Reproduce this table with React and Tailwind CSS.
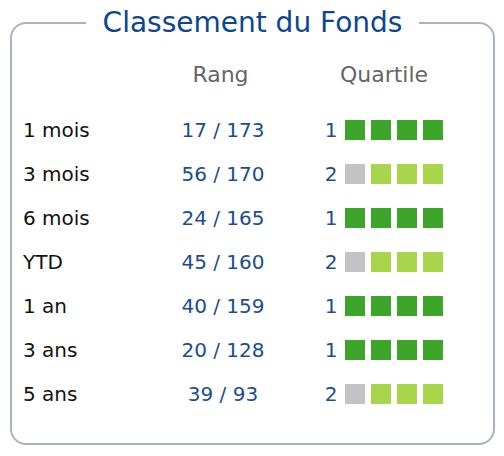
import React from "react";

const rows = [
  { label: "1 mois", rang: "17 / 173", q: 1 },
  { label: "3 mois", rang: "56 / 170", q: 2 },
  { label: "6 mois", rang: "24 / 165", q: 1 },
  { label: "YTD", rang: "45 / 160", q: 2 },
  { label: "1 an", rang: "40 / 159", q: 1 },
  { label: "3 ans", rang: "20 / 128", q: 1 },
  { label: "5 ans", rang: "39 / 93", q: 2 },
];

function Squares({ q }) {
  const colors =
    q === 1
      ? ["bg-[#3ea52b]", "bg-[#3ea52b]", "bg-[#3ea52b]", "bg-[#3ea52b]"]
      : ["bg-[#c4c1c7]", "bg-[#a8d64b]", "bg-[#a8d64b]", "bg-[#a8d64b]"];
  return (
    <div className="flex gap-[6px]">
      {colors.map((c, i) => (
        <div key={i} className={`w-[20px] h-[20px] ${c}`} />
      ))}
    </div>
  );
}

export default function App() {
  return (
    <div
      className="w-[504px] h-[456px] bg-white overflow-hidden"
      style={{ fontFamily: '"DejaVu Sans", Verdana, sans-serif' }}
    >
      <fieldset className="ml-[10px] mt-[7px] w-[485px] h-[438px] border-2 border-[#a7b3c7] rounded-[16px]">
        <legend className="mx-auto px-[17px] text-[28px] leading-[32px] text-[#0b4791]">
          Classement du Fonds
        </legend>
        <div className="pl-[11px] pt-[13px]">
          <div className="flex h-[44px] items-center text-[22px] text-[#666666] mb-[12px]">
            <div className="w-[127px]" />
            <div className="w-[146px] text-center pr-[5px]">Rang</div>
            <div className="w-[176px] text-center">Quartile</div>
          </div>
          {rows.map((r) => (
            <div key={r.label} className="flex h-[44px] items-center text-[20px]">
              <div className="w-[127px] text-[#111111]">{r.label}</div>
              <div className="w-[146px] text-center text-[#1a4e90]">{r.rang}</div>
              <div className="w-[176px] flex justify-center items-center">
                <span className="text-[#1a4e90] mr-[8px] leading-[20px]">{r.q}</span>
                <Squares q={r.q} />
              </div>
            </div>
          ))}
        </div>
      </fieldset>
    </div>
  );
}
